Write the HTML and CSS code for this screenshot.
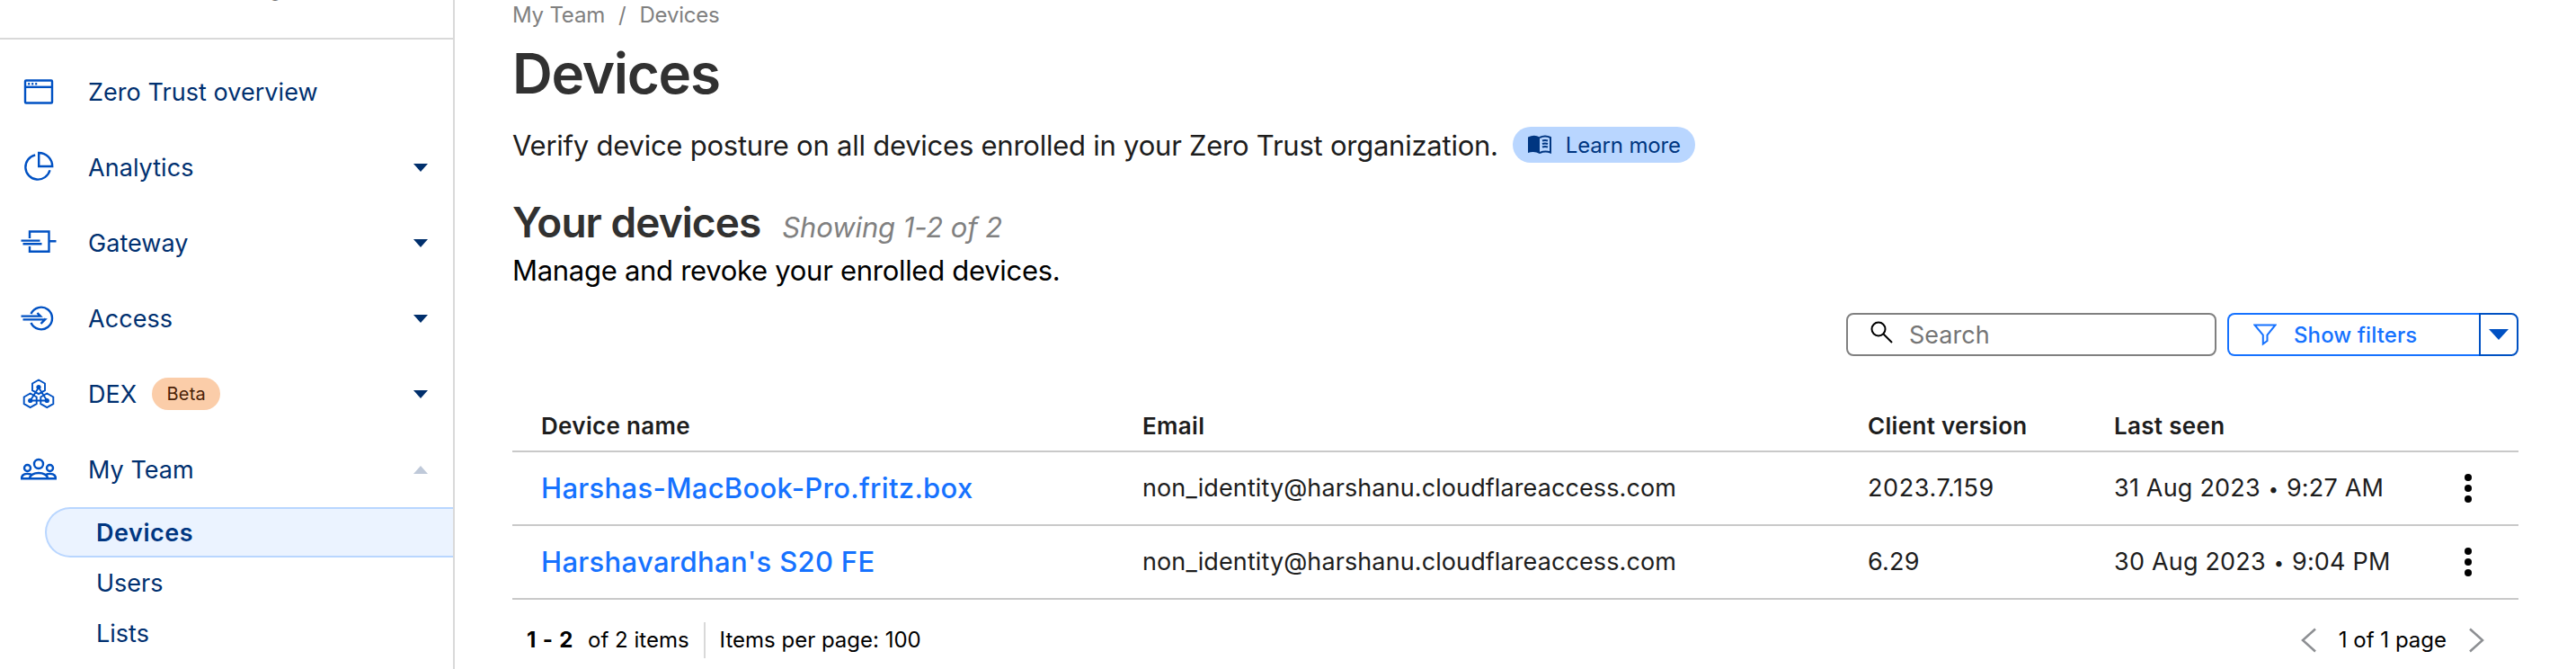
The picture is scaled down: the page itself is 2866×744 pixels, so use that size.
FILE: index.html
```html
<!DOCTYPE html>
<html lang="en">
<head>
<meta charset="utf-8">
<title>Devices</title>
<link rel="stylesheet" href="styles.css">
</head>
<body>
<aside class="sidebar">
  <div class="account"><span class="account-name">g</span></div>
  <nav class="nav">
    <a class="nav-item"><svg class="icon" viewBox="0 0 40 40"><rect x="5" y="7.500" width="30" height="25" rx="1"/><path d="M5 14.800H35"/><path d="M8.200 11.200h2M12.200 11.200h2M16.200 11.200h2"/></svg><span>Zero Trust overview</span></a>
    <a class="nav-item"><svg class="icon" viewBox="0 0 40 40"><path d="M16.200 6.300A13.800 13.800 0 1 0 32.500 23.300"/><path d="M20.200 4V19H35.200A15 15 0 0 0 20.200 4Z"/></svg><span>Analytics</span><i class="caret"></i></a>
    <a class="nav-item"><svg class="icon" viewBox="0 0 40 40"><path d="M10 15V7.500H31.500V29.800H10V24M31.500 18.300H39.500M0.500 17.600H21.500M2.500 21.200H23.500"/></svg><span>Gateway</span><i class="caret"></i></a>
    <a class="nav-item"><svg class="icon" viewBox="0 0 40 40"><path d="M11.500 15A12.300 12.300 0 1 1 11.500 25M0.500 17.600H22L18.500 14M2.500 21.400H27L22.500 26M27 21.400L26 20.500"/></svg><span>Access</span><i class="caret"></i></a>
    <a class="nav-item"><svg class="icon icon-thin" viewBox="0 0 40 40"><path d="M20 4.500l7 4v7.600l-7 4l-7-4V8.500ZM10.700 19.500l7 4v7.600l-7 4l-7-4V23.500ZM29.300 19.500l7 4v7.600l-7 4l-7-4V23.500ZM20 13L10.700 27.500H29.300Z"/><g class="dots"><circle cx="20" cy="12.500" r="2.600"/><circle cx="10.700" cy="27.500" r="2.600"/><circle cx="29.300" cy="27.500" r="2.600"/></g></svg><span>DEX</span><span class="beta">Beta</span><i class="caret"></i></a>
    <a class="nav-item"><svg class="icon" viewBox="0 0 40 40"><circle cx="20" cy="14" r="5"/><circle cx="7.500" cy="18.500" r="3.500"/><circle cx="32.500" cy="18.500" r="3.500"/><path d="M10 30.200C10 22 30 22 30 30.200ZM10 30.200H1C1 25 6 24 11.500 25.500M30 30.200H39C39 25 34 24 28.500 25.500"/></svg><span>My Team</span><i class="caret caret-up"></i></a>
  </nav>
  <div class="subnav">
    <a class="sub-item active">Devices</a>
    <a class="sub-item">Users</a>
    <a class="sub-item">Lists</a>
  </div>
</aside>
<main class="main">
  <div class="crumbs"><span>My Team</span><span class="slash">/</span><span>Devices</span></div>
  <h1 class="title">Devices</h1>
  <div class="intro"><span class="intro-text">Verify device posture on all devices enrolled in your Zero Trust organization.</span>
    <a class="learn"><svg class="book" viewBox="0 0 28 22"><path class="fill" d="M1 2.500Q8 -1 14 2.500V21Q8 17.500 1 20Z"/><path d="M14 3Q20 0 26 3V19.500Q20 17.500 14 20M17 6.500Q20 5.300 23 6.500M17 10Q20 8.800 23 10M17 13.500Q20 12.300 23 13.500"/></svg><span>Learn more</span></a></div>
  <div class="section"><h2 class="subtitle">Your devices</h2><em class="count">Showing 1-2 of 2</em></div>
  <p class="hint">Manage and revoke your enrolled devices.</p>
  <div class="toolbar">
    <div class="search"><svg class="glass" viewBox="0 0 26 26"><circle cx="9" cy="9" r="7.500"/><path d="M14.500 14.500L24 24"/></svg><span>Search</span></div>
    <div class="filters"><div class="filter-main"><svg class="funnel" viewBox="0 0 26 26"><path d="M1.500 2.500H24.500L15.500 13.500V20L10.800 23.500V13.500Z"/></svg><span>Show filters</span></div><div class="filter-drop"><i class="caret caret-filter"></i></div></div>
  </div>
  <div class="table">
    <div class="row head"><span>Device name</span><span>Email</span><span>Client version</span><span>Last seen</span><span></span></div>
    <div class="row"><a class="link">Harshas-MacBook-Pro.fritz.box</a><span class="email">non_identity@harshanu.cloudflareaccess.com</span><span class="version">2023.7.159</span><span class="seen">31 Aug 2023 <small class="bullet">•</small> 9:27 AM</span><span class="kebab"><i></i><i></i><i></i></span></div>
    <div class="row"><a class="link">Harshavardhan's S20 FE</a><span class="email">non_identity@harshanu.cloudflareaccess.com</span><span class="version short">6.29</span><span class="seen">30 Aug 2023 <small class="bullet">•</small> 9:04 PM</span><span class="kebab"><i></i><i></i><i></i></span></div>
  </div>
  <div class="footer"><b class="range">1 - 2</b><span class="total">of 2 items</span><span class="perpage">Items per page: 100</span>
    <div class="pager"><svg class="chev" viewBox="0 0 18 28"><path d="M16 1.500L2 14L16 26.500"/></svg><span>1 of 1 page</span><svg class="chev" viewBox="0 0 18 28"><path d="M2 1.500L16 14L2 26.500"/></svg></div></div>
</main>
</body>
</html>
```
FILE: styles.css
```css
* { box-sizing: border-box; }
body { margin: 0; width: 2866px; height: 744px; overflow: hidden; display: flex; background: #fff; color: #1d1d1d; font-family: Inter, "Liberation Sans", sans-serif; font-size: 27px; white-space: nowrap; }
h1, h2, p { margin: 0; }
svg { fill: none; stroke: currentColor; flex: none; }

.sidebar { width: 506px; height: 744px; flex: none; border-right: 2px solid #d9d9d9; color: #003070; }
.account { height: 44px; border-bottom: 2px solid #d9d9d9; overflow: hidden; padding-left: 298px; color: #000; }
.account-name { display: block; line-height: 32px; margin-top: -30px; font-size: 26px; font-weight: 600; }
.nav { padding-top: 16px; }
.nav-item { display: flex; align-items: center; height: 84px; padding: 0 28px 0 23px; letter-spacing: 0.05px; }
.icon { width: 40px; height: 40px; margin-right: 35px; color: #0051c3; stroke-width: 2.4; }
.icon-thin { stroke-width: 1.9; }
.dots { fill: currentColor; stroke: none; }
.caret { margin-left: auto; border: 8px solid transparent; border-width: 9px 8px 0; border-top-color: #002f6c; }
.caret-up { border-width: 0 8px 9px; border-bottom-color: #bfc9d9; }
.beta { width: 76px; height: 36px; line-height: 36px; margin-left: 17px; text-align: center; border-radius: 18px; background: #fbcda9; color: #4a2207; font-size: 20px; letter-spacing: 0.2px; }
.subnav { padding-left: 50px; }
.sub-item { display: flex; align-items: center; height: 56px; padding-left: 57px; }
.active { padding-left: 55px; border: 2px solid #b9d6ff; border-right: 0; border-radius: 28px 0 0 28px; background: #ebf3ff; color: #003681; font-weight: 600; letter-spacing: 0.55px; }

.main { flex: 1; padding: 0 64px; display: flex; flex-direction: column; }
.main > * { flex: none; }
.crumbs { display: flex; align-items: center; height: 32px; font-size: 24px; letter-spacing: -0.2px; color: #808080; }
.slash { margin: 0 15px; }
.title { height: 80px; margin-top: 10px; line-height: 80px; font-size: 62px; font-weight: 600; letter-spacing: -1.3px; color: #313131; }
.intro { display: flex; align-items: center; height: 40px; margin-top: 19px; font-size: 31px; }
.intro-text { letter-spacing: -0.24px; }
.learn { display: flex; align-items: center; width: 203px; height: 40px; margin-left: 16px; padding-left: 16px; border-radius: 20px; background: #b9d6ff; color: #003681; font-size: 24px; letter-spacing: -0.15px; }
.book { width: 28px; height: 22px; margin-right: 15px; stroke-width: 2; }
.fill { fill: currentColor; stroke: none; }
.section { display: flex; align-items: baseline; height: 50px; margin-top: 41px; line-height: 50px; }
.subtitle { font-size: 46px; font-weight: 600; letter-spacing: -0.95px; color: #313131; }
.count { margin-left: 24px; font-size: 31px; letter-spacing: -0.1px; color: #808080; }
.hint { height: 40px; margin-top: 9px; line-height: 40px; font-size: 31px; letter-spacing: -0.29px; color: #000; }
.toolbar { display: flex; justify-content: flex-end; gap: 12px; height: 48px; margin-top: 27px; }
.search { display: flex; align-items: center; width: 412px; padding-left: 25px; border: 2px solid #808080; border-radius: 8px; color: #757575; }
.glass { width: 26px; height: 26px; margin: -4px 17px 0 0; color: #000; stroke-width: 2; }
.filters { display: flex; width: 324px; font-size: 24px; font-weight: 500; letter-spacing: 0.1px; color: #1672ff; }
.filter-main { flex: 1; display: flex; align-items: center; padding-left: 27px; border: 2px solid #1672ff; border-right: 0; border-radius: 8px 0 0 8px; }
.funnel { width: 26px; height: 26px; margin-right: 19px; stroke-width: 2; }
.filter-drop { width: 44px; display: flex; align-items: center; justify-content: center; border: 2px solid #0051c3; border-radius: 0 8px 8px 0; }
.caret-filter { margin: 0; border-width: 12px 11px 0; border-top-color: #0051c3; }

.table { margin-top: 50px; }
.row { display: grid; grid-template-columns: 669px 807px 274px 380px 1fr; align-items: center; height: 82px; padding-left: 32px; border-bottom: 2px solid #c9c9c9; }
.head { height: 57px; font-size: 26px; font-weight: 600; letter-spacing: 0.32px; }
.link { padding-bottom: 1px; font-size: 31px; font-weight: 500; letter-spacing: 0.31px; color: #1672ff; }
.email { letter-spacing: 0.1px; }
.version { letter-spacing: 0.6px; }
.short { letter-spacing: 0.2px; }
.seen { letter-spacing: 0.2px; }
.bullet { font-size: 20px; margin: 0 1px; vertical-align: 1px; }
.email, .version, .seen { padding-bottom: 1px; }
.kebab { display: flex; flex-direction: column; gap: 4px; padding-left: 10px; }
.kebab i { width: 8px; height: 8px; border-radius: 50%; background: #000; }
.footer { display: flex; align-items: center; height: 89px; padding: 0 38px 0 16px; font-size: 24px; color: #000; }
.range { letter-spacing: 0.8px; }
.total { margin-left: 16px; }
.perpage { display: flex; align-items: center; height: 40px; margin-left: 16px; padding-left: 16px; border-left: 2px solid #d9d9d9; }
.pager { display: flex; align-items: center; gap: 24px; margin-left: auto; }
.chev { width: 18px; height: 28px; color: #8d8f93; stroke-width: 2.5; }
```
